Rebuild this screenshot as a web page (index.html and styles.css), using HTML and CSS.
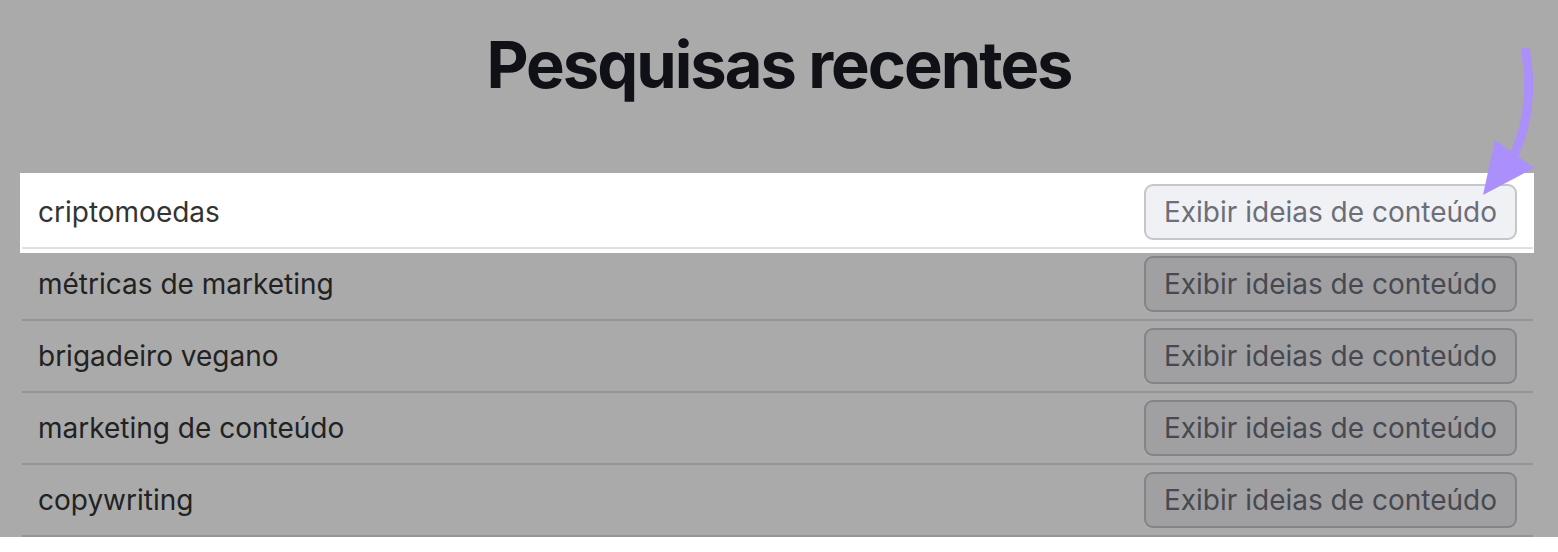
FILE: index.html
```html
<!DOCTYPE html>
<html lang="pt">
<head>
    <meta charset="UTF-8">
    <title>Pesquisas recentes</title>
    <link rel="stylesheet" href="styles.css">
</head>
<body>
    <h1 class="title">Pesquisas recentes</h1>

    <div class="recent-list">
        <div class="recent-row">
            <span class="keyword">criptomoedas</span>
            <button class="ideas-btn">Exibir ideias de conteúdo</button>
            <div class="spotlight"></div>
        </div>
        <div class="recent-row">
            <span class="keyword">métricas de marketing</span>
            <button class="ideas-btn">Exibir ideias de conteúdo</button>
        </div>
        <div class="recent-row">
            <span class="keyword">brigadeiro vegano</span>
            <button class="ideas-btn">Exibir ideias de conteúdo</button>
        </div>
        <div class="recent-row">
            <span class="keyword">marketing de conteúdo</span>
            <button class="ideas-btn">Exibir ideias de conteúdo</button>
        </div>
        <div class="recent-row">
            <span class="keyword">copywriting</span>
            <button class="ideas-btn">Exibir ideias de conteúdo</button>
        </div>
    </div>

    <svg class="pointer-arrow" width="80" height="170" viewBox="1470 40 80 170">
        <path d="M1525 48 C1532 85, 1530 122, 1512 160" fill="none" stroke="#ab8ffa" stroke-width="9"/>
        <polygon points="1495,140 1534,168 1483,195" fill="#ab8ffa"/>
    </svg>
</body>
</html>
```

FILE: styles.css
```css
* {
    box-sizing: border-box;
}

body {
    margin: 0;
    background: #fff;
    font-family: Inter, "Noto Sans", sans-serif;
    color: #333;
    overflow: hidden;
}

.title {
    margin: 0;
    padding-top: 25px;
    font-size: 65px;
    font-weight: 700;
    line-height: 80px;
    text-align: center;
    color: #191a22;
    letter-spacing: -2px;
}

.recent-list {
    margin-top: 72px;
    margin-left: 22px;
    width: 1511px;
}

.recent-row {
    position: relative;
    display: flex;
    align-items: center;
    justify-content: space-between;
    height: 72px;
    padding: 0 16px;
    border-bottom: 2px solid #dde0e5;
}

.keyword {
    font-size: 28px;
}

.ideas-btn {
    height: 56px;
    padding: 0 18px;
    font-family: inherit;
    font-size: 28px;
    color: #6c6e79;
    background: #f0f1f4;
    border: 2px solid #c4c6cc;
    border-radius: 9px;
}

.spotlight {
    position: absolute;
    top: -4px;
    bottom: -6px;
    left: -2px;
    right: -1px;
    box-shadow: 0 0 0 3000px rgba(0, 0, 0, 0.333);
    z-index: 1;
    pointer-events: none;
}

.pointer-arrow {
    position: absolute;
    left: 1470px;
    top: 40px;
    z-index: 2;
}
```
